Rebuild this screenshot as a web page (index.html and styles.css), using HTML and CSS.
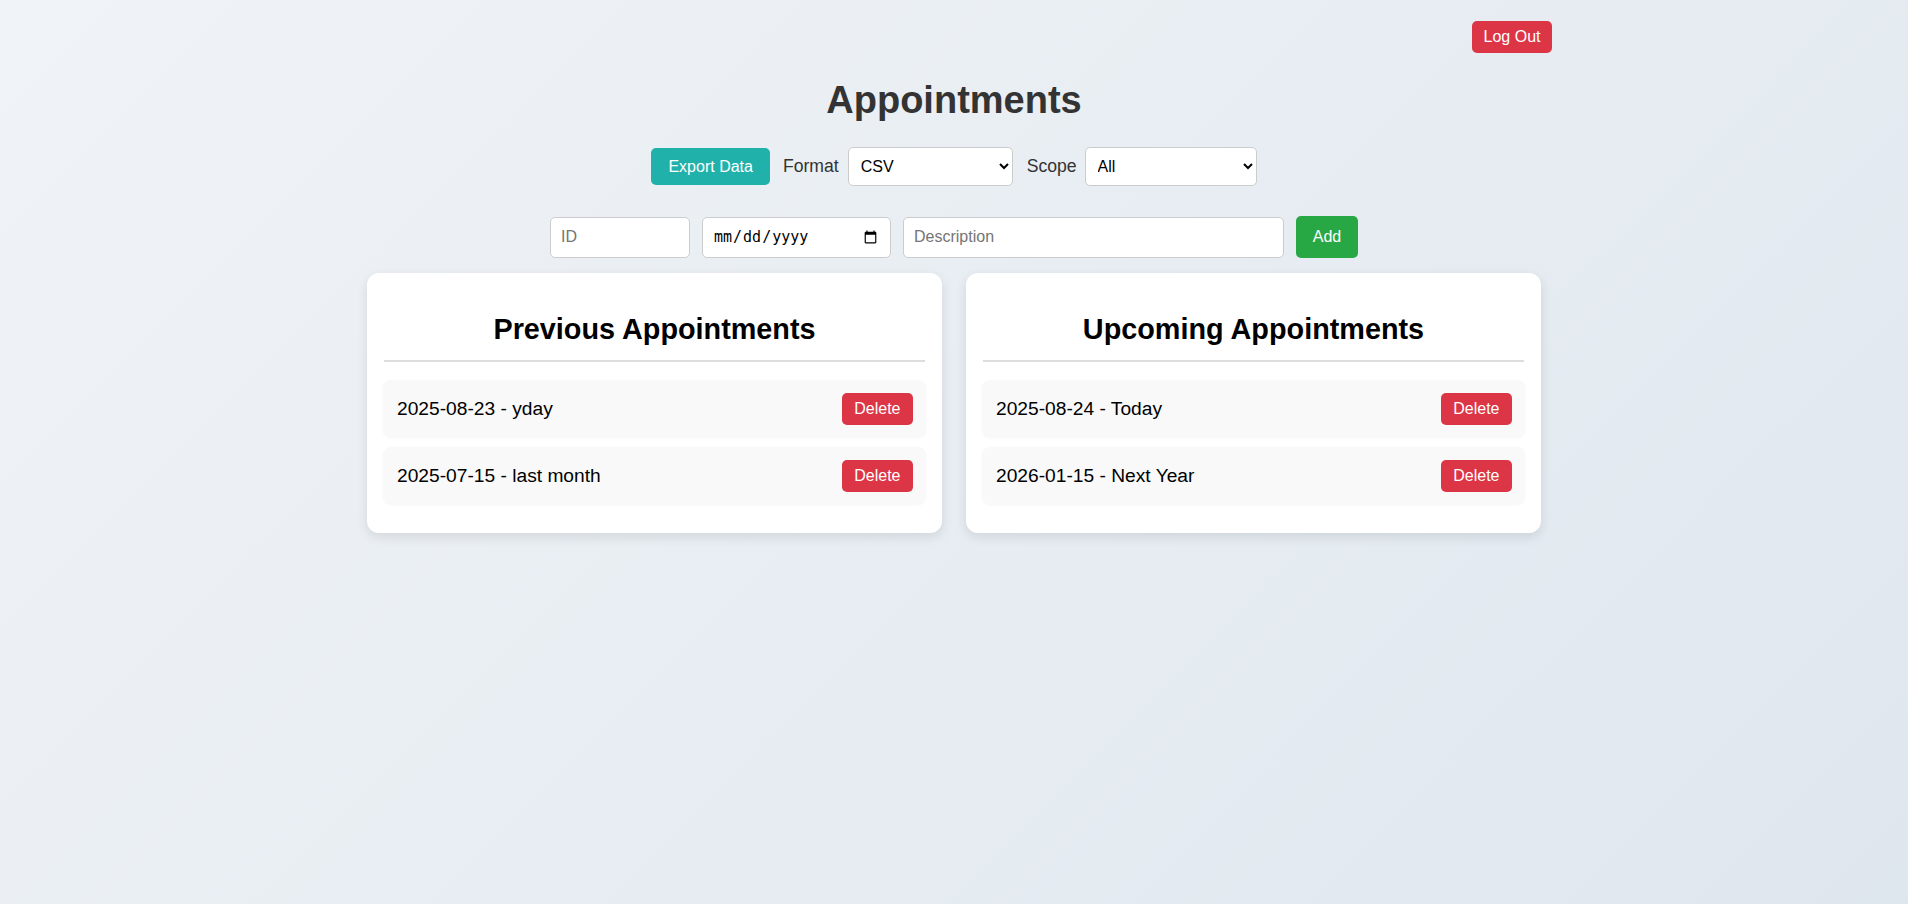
FILE: index.html
```html
<!DOCTYPE html>
<html lang="en">
<head>
<meta charset="utf-8">
<title>Appointments</title>
<link rel="stylesheet" href="styles.css">
</head>
<body>
  <div class="topbar">
    <button class="btn btn-danger btn-logout">Log Out</button>
  </div>
  <h1 class="title">Appointments</h1>
  <div class="export-row">
    <button class="btn btn-export">Export Data</button>
    <label class="field-label label-format" for="format">Format</label>
    <select id="format" class="select select-format">
      <option>CSV</option>
      <option>JSON</option>
    </select>
    <label class="field-label label-scope" for="scope">Scope</label>
    <select id="scope" class="select select-scope">
      <option>All</option>
      <option>Previous</option>
      <option>Upcoming</option>
    </select>
  </div>
  <form class="add-row" onsubmit="return false">
    <input class="input input-id" type="text" placeholder="ID">
    <input class="input-date" type="date">
    <input class="input input-desc" type="text" placeholder="Description">
    <button class="btn btn-add" type="submit">Add</button>
  </form>
  <div class="cards">
    <section class="card">
      <h2 class="card-title">Previous Appointments</h2>
      <ul class="list">
        <li class="item"><span>2025-08-23 - yday</span><button class="btn btn-danger btn-delete">Delete</button></li>
        <li class="item"><span>2025-07-15 - last month</span><button class="btn btn-danger btn-delete">Delete</button></li>
      </ul>
    </section>
    <section class="card">
      <h2 class="card-title">Upcoming Appointments</h2>
      <ul class="list">
        <li class="item"><span>2025-08-24 - Today</span><button class="btn btn-danger btn-delete">Delete</button></li>
        <li class="item"><span>2026-01-15 - Next Year</span><button class="btn btn-danger btn-delete">Delete</button></li>
      </ul>
    </section>
  </div>
</body>
</html>
```

FILE: styles.css
```css
html, body {
  margin: 0;
  padding: 0;
}

body {
  min-height: 100vh;
  background: linear-gradient(135deg, #f0f3f7 0%, #dfe7ee 100%);
  font-family: "Liberation Sans", Arial, sans-serif;
  color: #000;
}

.topbar {
  width: 1196px;
  margin: 0 auto;
  padding-top: 21px;
  display: flex;
  justify-content: flex-end;
}

.btn {
  border: none;
  border-radius: 5px;
  color: #fff;
  font-family: "Liberation Sans", Arial, sans-serif;
  font-size: 16px;
  line-height: 18px;
  cursor: pointer;
}

.btn-danger {
  background: #dc3545;
}

.btn-logout {
  padding: 7px 11.5px;
}

.title {
  margin: 25px 0 0;
  text-align: center;
  font-size: 38px;
  line-height: 44px;
  font-weight: bold;
  color: #333;
}

.export-row {
  margin-top: 25px;
  display: flex;
  justify-content: center;
  align-items: center;
}

.btn-export {
  background: #20b2aa;
  height: 37px;
  padding: 0 17px;
}

.field-label {
  font-size: 17.6px;
  color: #333;
}

.label-format {
  margin-left: 13px;
  margin-right: 9px;
}

.label-scope {
  margin-left: 14px;
  margin-right: 8px;
}

.select {
  height: 39px;
  padding: 0 8px;
  border: 1px solid #ccc;
  border-radius: 5px;
  background: #fff;
  font-family: "Liberation Sans", Arial, sans-serif;
  font-size: 16px;
  color: #000;
}

.select-format {
  width: 165px;
}

.select-scope {
  width: 172px;
}

.add-row {
  margin: 30px 0 0;
  display: flex;
  justify-content: center;
  align-items: center;
  gap: 12px;
}

.input,
.input-date {
  box-sizing: border-box;
  height: 41px;
  padding: 0 10px;
  border: 1px solid #ccc;
  border-radius: 5px;
  background: #fff;
  font-size: 16px;
  color: #000;
}

.input {
  font-family: "Liberation Sans", Arial, sans-serif;
}

.input::placeholder {
  color: #757575;
}

.input-id {
  width: 140px;
}

.input-date {
  width: 189px;
  font-family: "DejaVu Sans Mono", monospace;
  font-size: 15px;
}

.input-desc {
  width: 381px;
}

.btn-add {
  background: #28a745;
  width: 62px;
  height: 42px;
  padding: 0;
}

.cards {
  width: 1174px;
  margin: 15px auto 0;
  display: grid;
  grid-template-columns: 1fr 1fr;
  gap: 24px;
  align-items: start;
}

.card {
  background: #fff;
  border-radius: 12px;
  padding: 16px;
  box-shadow: 0 4px 12px rgba(0, 0, 0, 0.1);
}

.card-title {
  margin: 24px 1px 18px;
  padding-bottom: 14px;
  border-bottom: 2px solid #ddd;
  text-align: center;
  font-size: 28.8px;
  line-height: 33px;
  font-weight: bold;
  color: #000;
}

.list {
  list-style: none;
  margin: 0 0 13px;
  padding: 0;
  display: flex;
  flex-direction: column;
  gap: 10px;
}

.item {
  display: flex;
  justify-content: space-between;
  align-items: center;
  padding: 12.5px 13px 12.5px 14px;
  background: #f9f9f9;
  border-radius: 8px;
  box-shadow: 0 1px 3px rgba(0, 0, 0, 0.04);
  font-size: 19.2px;
}

.btn-delete {
  padding: 7px 12.5px;
}
```
